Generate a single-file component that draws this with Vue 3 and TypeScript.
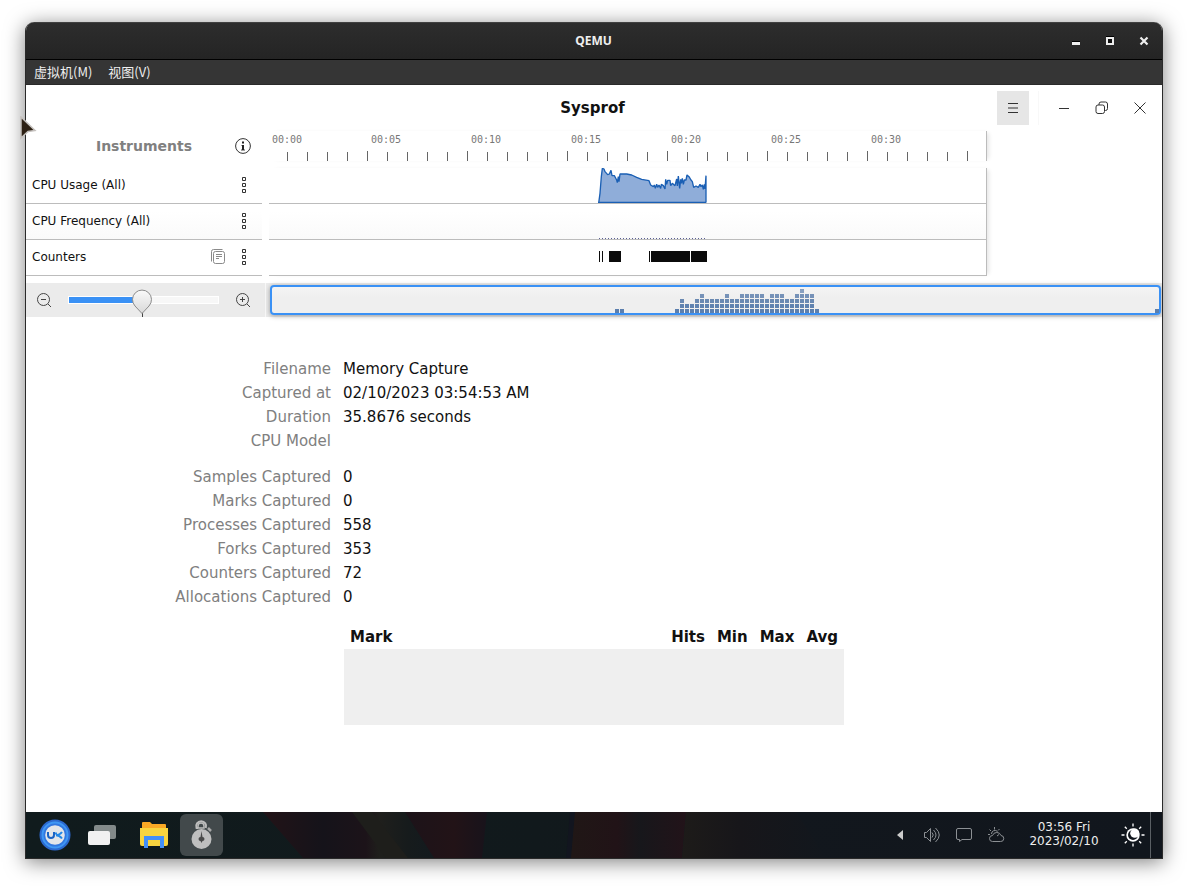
<script setup lang="ts">
import { ref, computed } from 'vue'

const menus = ['虚拟机(M)', '视图(V)']

const tickCount = 35
const ticks = Array.from({ length: tickCount }, (_, i) => ({
  x: 18 + i * 20,
  top: i >= 4 && i % 5 === 4 ? 20 : 21,
}))
const timeLabels = ['00:00', '00:05', '00:10', '00:15', '00:20', '00:25', '00:30']

const usagePoints: [number, number][] = [
  [41, 234], [45, 205], [49, 155], [52, 130], [57, 132], [60, 140], [68, 149], [73, 147], [78, 136],
  [81, 152], [88, 152], [95, 165], [97, 173], [100, 155], [102, 170], [105, 147], [125, 147],
  [140, 150], [155, 157], [170, 163], [192, 167], [197, 180], [205, 185], [208, 180], [211, 190],
  [215, 178], [218, 187], [222, 180], [227, 190], [229, 178], [235, 182], [240, 192], [242, 163],
  [245, 178], [248, 166], [255, 166], [257, 182], [262, 175], [270, 182], [275, 162], [277, 183],
  [280, 153], [284, 190], [287, 163], [289, 175], [292, 160], [295, 178], [298, 165], [303, 165],
  [306, 150], [312, 155], [318, 165], [322, 170], [326, 187], [333, 183], [340, 187], [345, 178],
  [348, 185], [352, 180], [355, 193], [358, 178], [360, 192], [363, 152], [363, 232], [41, 232],
]
const usagePath = computed(() => usagePoints.map(([x, y]) => `${x},${y}`).join(' '))

const counterBlocks = [
  { x: 330, w: 1 }, { x: 333, w: 1 }, { x: 340, w: 12 },
  { x: 380, w: 1 }, { x: 382, w: 39 }, { x: 422, w: 16 },
]

const density = [1, 3, 2, 2, 3, 4, 3, 3, 3, 3, 4, 3, 3, 4, 4, 4, 4, 4, 3, 4, 4, 4, 3, 3, 4, 5, 4, 4, 1]
const columns = [
  { x: 343, n: 1 }, { x: 348, n: 1 },
  ...density.map((n, i) => ({ x: 403 + i * 5, n })),
  { x: 883, n: 1 },
]
const cells = columns.flatMap(({ x, n }) =>
  Array.from({ length: n }, (_, level) => ({ x, y: 22 - level * 5, level })),
)
const cellColors = ['#5b7fae', '#6183b0', '#6a89b2', '#7692b8', '#879fc0']

const zoom = ref(49)

const captureInfo = [
  ['Filename', 'Memory Capture'],
  ['Captured at', '02/10/2023 03:54:53 AM'],
  ['Duration', '35.8676 seconds'],
  ['CPU Model', ''],
]
const captureStats = [
  ['Samples Captured', '0'],
  ['Marks Captured', '0'],
  ['Processes Captured', '558'],
  ['Forks Captured', '353'],
  ['Counters Captured', '72'],
  ['Allocations Captured', '0'],
]
const groups = [captureInfo, captureStats]
</script>

<template>
  <div class="desktop">
    <section class="window">
      <header class="titlebar">
        <span></span>
        <h1>QEMU</h1>
        <div class="wm">
          <button aria-label="Minimize"><svg width="12" height="12"><path d="M2 8.500h8" stroke="#eee" stroke-width="3" /><path d="M2 6.500h8" stroke="#000" /></svg></button>
          <button aria-label="Maximize"><svg width="12" height="12"><rect x="3" y="3" width="6" height="6" fill="#111" stroke="#eee" stroke-width="2" /><path d="M2 1.500h8" stroke="#000" /></svg></button>
          <button aria-label="Close"><svg width="12" height="12"><path d="M2.500 2.500l7 7M9.500 2.500l-7 7" stroke="#eee" stroke-width="2.200" /></svg></button>
        </div>
      </header>
      <nav class="menubar">
        <button v-for="m in menus" :key="m">{{ m }}</button>
      </nav>

      <main class="app">
        <header class="appbar">
          <span></span>
          <h2>Sysprof</h2>
          <div class="controls">
            <button class="burger" aria-label="Menu"><svg width="10" height="10"><path d="M0 .5h10M0 5h10M0 9.500h10" stroke="#333" /></svg></button>
            <i class="divider"></i>
            <button aria-label="Minimize"><svg width="12" height="12"><path d="M1 6.500h10" stroke="#333" /></svg></button>
            <button aria-label="Restore">
              <svg width="14" height="14" fill="none" stroke="#333"><rect x="1" y="4" width="8.500" height="8.500" rx="2" /><path d="M4 4V3a2 2 0 0 1 2-2h4.500a2 2 0 0 1 2 2v4.500a2 2 0 0 1-2 2h-1" /></svg>
            </button>
            <button aria-label="Close"><svg width="12" height="12"><path d="M.5 .5l11 11M11.500 .5l-11 11" stroke="#333" /></svg></button>
          </div>
        </header>

        <div class="instruments">
          <div class="side-head">
            <span></span>
            <h3>Instruments</h3>
            <button aria-label="Information">
              <svg width="16" height="16"><circle cx="8" cy="8" r="7.400" fill="none" stroke="#333" /><path d="M8 3.500v2" stroke="#222" stroke-width="2" /><path d="M6.500 7.500H8M6 12h4" fill="none" stroke="#444" /><path d="M8 7v5" stroke="#222" stroke-width="2" /></svg>
            </button>
          </div>
          <div class="ruler">
            <svg width="717" height="30" aria-label="Timeline">
              <text v-for="(t, i) in timeLabels" :key="t" :x="i === 0 ? 3 : 2 + i * 100" y="12">{{ t }}</text>
              <rect v-for="t in ticks" :key="t.x" :x="t.x" :y="t.top" width="1" :height="30 - t.top" fill="#666" />
            </svg>
          </div>

          <div class="side-rows">
            <div class="side-row">
              <span>CPU Usage (All)</span>
              <button aria-label="CPU usage options"><svg class="dots" width="4" height="16"><path d="M.5 .5h3v3h-3zM.5 6.500h3v3h-3zM.5 12.500h3v3h-3z" /></svg></button>
            </div>
            <div class="side-row shade">
              <span>CPU Frequency (All)</span>
              <button aria-label="CPU frequency options"><svg class="dots" width="4" height="16"><path d="M.5 .5h3v3h-3zM.5 6.500h3v3h-3zM.5 12.500h3v3h-3z" /></svg></button>
            </div>
            <div class="side-row">
              <span>Counters</span>
              <button aria-label="Expand counters">
                <svg width="16" height="16" fill="none" stroke="#8a8a8a"><rect x="3.500" y="2.500" width="11" height="12" rx="2" /><path d="M1.500 12.500V2.500a2 2 0 0 1 2-2H12.500M6 5.500h6M6 7.500h6M6 9.500h3" /></svg>
              </button>
              <button aria-label="Counters options"><svg class="dots" width="4" height="16"><path d="M.5 .5h3v3h-3zM.5 6.500h3v3h-3zM.5 12.500h3v3h-3z" /></svg></button>
            </div>
          </div>
          <div class="tracks">
            <div class="track">
              <svg width="717" height="35" viewBox="0 0 2151 105">
                <polygon transform="translate(948 -129)" :points="usagePath" fill="#8fadd9" stroke="#1a5fb4" stroke-width="4" stroke-linejoin="bevel" />
              </svg>
            </div>
            <div class="track shade">
              <svg width="717" height="35"><path d="M330 34.500H438" stroke="#5a5f94" stroke-dasharray="1 2" /></svg>
            </div>
            <div class="track">
              <svg width="717" height="35"><rect v-for="b in counterBlocks" :key="b.x" :x="b.x" y="11" :width="b.w" height="11" fill="#0b0b0b" /></svg>
            </div>
          </div>
        </div>

        <div class="zoombar">
          <div class="zoomer">
            <button aria-label="Zoom out"><svg width="16" height="16" fill="none" stroke="#444"><circle cx="7.500" cy="7.500" r="6" /><path d="M12 12l3 3M5 7.500h5" /></svg></button>
            <input v-model.number="zoom" type="range" min="0" max="100" aria-label="Zoom" />
            <button aria-label="Zoom in"><svg width="16" height="16" fill="none" stroke="#444"><circle cx="7.500" cy="7.500" r="6" /><path d="M12 12l3 3M5 7.500h5M7.500 5v5" /></svg></button>
          </div>
          <div class="overview">
            <svg viewBox="0 0 887 26" preserveAspectRatio="none" shape-rendering="crispEdges">
              <rect v-for="(c, i) in cells" :key="i" :x="c.x" :y="c.y" width="4" height="4" :fill="cellColors[c.level]" />
            </svg>
          </div>
        </div>

        <div class="details">
          <dl v-for="(g, i) in groups" :key="i">
            <template v-for="[label, value] in g" :key="label">
              <dt>{{ label }}</dt>
              <dd>{{ value }}</dd>
            </template>
          </dl>
          <table>
            <thead>
              <tr><th class="wide">Mark</th><th>Hits</th><th>Min</th><th>Max</th><th>Avg</th></tr>
            </thead>
            <tbody>
              <tr><td colspan="5"></td></tr>
            </tbody>
          </table>
        </div>
      </main>

      <footer class="taskbar">
        <svg class="wallpaper" viewBox="0 0 1136 46" preserveAspectRatio="none">
          <defs>
            <linearGradient id="base"><stop offset="0" stop-color="#101b1d" /><stop offset=".45" stop-color="#11191c" /><stop offset=".65" stop-color="#12171d" /><stop offset="1" stop-color="#11161d" /></linearGradient>
            <linearGradient id="beamA"><stop offset="0" stop-color="#221317" /><stop offset=".35" stop-color="#15131a" /><stop offset=".6" stop-color="#1c1319" /><stop offset=".68" stop-color="#1f1f1c" /><stop offset=".85" stop-color="#161b1c" /><stop offset="1" stop-color="#131a1e" /></linearGradient>
            <linearGradient id="beamB"><stop offset="0" stop-color="#1c1319" /><stop offset=".6" stop-color="#221317" /><stop offset="1" stop-color="#18131b" /></linearGradient>
            <linearGradient id="beamC"><stop offset="0" stop-color="#201716" /><stop offset=".4" stop-color="#211317" /><stop offset=".6" stop-color="#17171b" /><stop offset="1" stop-color="#221319" /></linearGradient>
            <linearGradient id="beamD"><stop offset="0" stop-color="#1d1b19" /><stop offset=".4" stop-color="#17161a" /><stop offset="1" stop-color="#12171d" /></linearGradient>
          </defs>
          <rect width="1136" height="46" fill="url(#base)" />
          <polygon points="237,0 379,0 408,46 277,46" fill="url(#beamA)" />
          <polygon points="326,0 346,0 382,46 360,46" fill="#1e1e1b" />
          <polygon points="379,0 461,0 456,46 408,46" fill="url(#beamB)" />
          <polygon points="544,0 549,0 545,46 540,46" fill="#12151f" />
          <polygon points="549,0 660,0 656,46 545,46" fill="url(#beamC)" />
          <polygon points="660,0 770,0 800,46 656,46" fill="url(#beamD)" />
        </svg>
        <div class="launchers">
          <button aria-label="Start">
            <svg width="32" height="32"><circle cx="16" cy="16" r="15.500" fill="#2c69cf" /><circle cx="16" cy="16" r="12.500" fill="#3277e0" stroke="#3f97f4" stroke-width="2" /><circle cx="16" cy="16" r="9.800" fill="#e3e5e9" /><path d="M9 13v3q0 3 3 3t3-3v-3" fill="none" stroke="#1a62c4" stroke-width="2" /><path d="M23 13q-2 3-6 3.200 3.500 0 6 3.300M17 13.500v2" fill="none" stroke="#2387e6" stroke-width="2" /></svg>
          </button>
          <button aria-label="Task view">
            <svg width="28" height="20"><rect x="6" width="22" height="14" rx="2" fill="#838a8a" /><rect y="6" width="22" height="14" rx="2" fill="#f1f1f1" /></svg>
          </button>
          <button class="apart" aria-label="Files">
            <svg width="28" height="26"><path d="M2 1q0-1 1-1h7l2 2h13q1 0 1 1v6H2z" fill="#f9a825" /><path d="M0 6h28v16q0 2-2 2H2q-2 0-2-2z" fill="#f8d43f" /><path d="M4 26V14h20v12h-4v-8H8v8z" fill="#438ff8" /></svg>
          </button>
          <button class="active" aria-label="Sysprof">
            <svg width="24" height="32"><path d="M8 9H6.500A5 5 0 1 1 15.800 9" fill="none" stroke="#bdbdbd" stroke-width="2" /><path d="M8 9V7a3 3 0 0 1 6 0v2z" fill="#42494b" stroke="#bdbdbd" stroke-width="1.500" /><path d="M18 9l3 3" stroke="#a8a8a8" stroke-width="2.500" /><circle cx="11.500" cy="20" r="10" fill="#bfbfbf" /><path d="M11.500 12l1 6a2 2 0 0 1 0 4l-1 2-1-2a2 2 0 0 1 0-4z" fill="#4a4a4a" /></svg>
          </button>
        </div>
        <div class="tray">
          <button aria-label="Show hidden icons"><svg width="6" height="10"><path d="M6 0v10L0 5z" fill="#ccc" /></svg></button>
          <button aria-label="Volume"><svg width="18" height="16" fill="none" stroke="#8c9094"><path d="M1.500 5.500h2L7.500 1.500v13L3.500 10.500h-2zM9 5.500q2.500 2.500 0 5M10.500 3q5 5 0 10M12.500 1q7.500 7 0 14" /></svg></button>
          <button aria-label="Notifications"><svg width="16" height="14" fill="none" stroke="#8c9094"><path d="M2 .5h12q1.500 0 1.500 1.500v8q0 1.500-1.500 1.500H6L3.500 13.500v-2H2q-1.500 0-1.500-1.500V2Q.5 .5 2 .5z" /></svg></button>
          <button aria-label="Weather"><svg width="17" height="16" fill="none" stroke="#8c9094"><path d="M4.500 14.500a3 3 0 0 1 0-6 4.500 4.500 0 0 1 8.500 0 3 3 0 0 1-.5 6zM3.500 7A3.500 3.500 0 0 1 9.500 4.500M6.500 0v2.500M1.500 2.500L3 4M11.500 2L10 3.500M0 7.500h2M9 9l2-1.500" /></svg></button>
          <time>03:56 Fri<br />2023/02/10</time>
          <button class="night" aria-label="Night mode">
            <svg width="24" height="24"><circle cx="12" cy="12" r="6.700" fill="#fff" /><circle cx="12" cy="12" r="5" fill="#11161d" /><circle cx="13.800" cy="10.200" r="4.600" fill="#fff" /><path d="M12 .5v3M12 20.500v3M.5 12h3M20.500 12h3M3.800 3.800l2 2M18.200 18.200l2 2M20.200 3.800l-2 2M5.800 18.200l-2 2" stroke="#fff" stroke-width="1.300" /></svg>
          </button>
          <button class="show-desktop" aria-label="Show desktop"></button>
        </div>
      </footer>
    </section>

    <svg class="pointer" width="18" height="24"><path d="M1 1L15 14.500 8 15.500 1 22z" fill="#2d2013" stroke="#c4c0bd" stroke-width="1.500" /></svg>
  </div>
</template>

<style>
body {
  margin: 0;
  background: #fff;
}
</style>

<style scoped>
* {
  box-sizing: border-box;
}
.desktop {
  position: relative;
  display: flex;
  min-height: 100vh;
  padding: 22px 25px 28px;
  background: #fff;
  font-family: "DejaVu Sans", sans-serif;
  color: #111;
}
button {
  display: flex;
  align-items: center;
  justify-content: center;
  padding: 0;
  border: 0;
  background: none;
  color: inherit;
  font: inherit;
}
svg {
  display: block;
}
h1,
h2,
h3,
dl,
dd {
  margin: 0;
}
.window {
  flex: 1;
  display: flex;
  flex-direction: column;
  min-width: 0;
  overflow: hidden;
  border: 1px solid #2a2a2a;
  border-top: 0;
  border-radius: 9px 9px 0 0;
  background: #fff;
  box-shadow: 0 3px 20px rgba(0, 0, 0, 0.5);
}
.titlebar {
  display: grid;
  grid-template-columns: 1fr auto 1fr;
  align-items: center;
  height: 38px;
  padding-right: 1px;
  border-top: 1px solid #404040;
  border-bottom: 1px solid #000;
  background: linear-gradient(#2d2d2d, #242424);
}
.titlebar h1 {
  color: #eee;
  font: 700 12px/18px "Noto Sans", "Noto Sans CJK SC", sans-serif;
}
.wm {
  display: flex;
  justify-content: flex-end;
}
.wm button {
  width: 34px;
  height: 34px;
}
.menubar {
  display: flex;
  gap: 16px;
  height: 25px;
  padding: 0 8px;
  border-bottom: 1px solid #2a2a2a;
  background: #353535;
  color: #eee;
  font: 13px/20px "Noto Sans CJK SC", sans-serif;
}
.app {
  flex: 1;
}
.appbar {
  display: grid;
  grid-template-columns: 1fr auto 1fr;
  align-items: center;
  height: 46px;
  padding-right: 3px;
}
.appbar h2 {
  font-size: 15px;
  line-height: 24px;
}
.controls {
  display: flex;
  align-items: center;
  justify-content: flex-end;
}
.controls button {
  width: 38px;
  height: 34px;
}
.controls .burger {
  width: 32px;
  background: #e6e6e6;
}
.divider {
  width: 1px;
  height: 34px;
  margin: 0 6px 0 9px;
  background: #f8f8f8;
}
.instruments {
  display: grid;
  grid-template-columns: 236px 1fr;
  grid-template-rows: 30px auto;
  gap: 7px;
}
.side-head {
  display: grid;
  grid-template-columns: 24px 1fr 24px;
  align-items: center;
  padding: 0 7px;
}
.side-head h3 {
  color: #808080;
  font-size: 14px;
  line-height: 24px;
  text-align: center;
}
.ruler,
.tracks {
  justify-self: start;
  border-right: 1px solid #bcbcbc;
  box-shadow: 4px 0 4px -2px rgba(0, 0, 0, 0.1);
}
.ruler text {
  fill: #777;
  font: 10px "DejaVu Sans Mono", monospace;
}
.side-row {
  display: flex;
  align-items: center;
  gap: 2px;
  height: 36px;
  padding: 0 6px 1px;
  border-bottom: 1px solid #bcbcbc;
  font-size: 12px;
  line-height: 20px;
}
.side-row span {
  flex: 1;
}
.side-row button {
  width: 24px;
  height: 24px;
}
.dots {
  fill: none;
  stroke: #333;
}
.shade {
  background: linear-gradient(#fff 20%, #fafafa);
}
.track {
  border-bottom: 1px solid #bcbcbc;
}
.zoombar {
  display: flex;
  margin-top: 7px;
  height: 34px;
  background: #ebebeb;
}
.zoomer {
  display: flex;
  align-items: center;
  width: 240px;
  padding: 0 14px 0 10px;
  border-right: 1px solid #f8f8f8;
}
.zoomer button {
  width: 16px;
  height: 16px;
}
.zoomer input {
  flex: 1;
  min-width: 0;
  height: 8px;
  margin: 0 16px;
  appearance: none;
  border: 1px solid #fff;
  background: linear-gradient(90deg, #3a91f5 50%, #f7f7f7 50%);
}
.zoomer input::-webkit-slider-thumb {
  appearance: none;
  width: 20px;
  height: 28px;
  margin-top: 6px;
  background: url("data:image/svg+xml,%3Csvg xmlns='http://www.w3.org/2000/svg' width='20' height='28'%3E%3ClinearGradient id='g' x2='0' y2='1'%3E%3Cstop stop-color='%23fafafa'/%3E%3Cstop offset='1' stop-color='%23d8d8d8'/%3E%3C/linearGradient%3E%3Cpath d='M10.500 23v5' stroke='%23444'/%3E%3Cpath d='M10 24.500L3 17A9.500 9.500 0 1 1 17 17z' fill='url(%23g)' stroke='%238c8c8c'/%3E%3C/svg%3E") no-repeat;
}
.overview {
  flex: 1;
  min-width: 0;
  margin: 2px 1px 2px 4px;
  border: 2px solid #3a91f5;
  border-radius: 4px;
  background: linear-gradient(#f4f4f4, #efefef 40%);
  box-shadow: 0 1px 5px rgba(0, 0, 0, 0.35);
}
.overview svg {
  width: 100%;
  height: 26px;
}
.details {
  display: flex;
  flex-direction: column;
  gap: 12px;
  padding: 40px 0;
  font-size: 15px;
  line-height: 24px;
}
dl {
  display: grid;
  grid-template-columns: 1fr 502px 1fr;
  grid-auto-rows: 24px;
}
dt {
  grid-column: 1;
  padding-right: 12px;
  color: #808080;
  text-align: right;
}
dd {
  grid-column: 2;
}
table {
  width: 500px;
  margin: 4px auto 0;
  border-collapse: collapse;
}
th {
  padding: 0 6px;
  text-align: left;
}
.wide {
  width: 100%;
}
td {
  height: 76px;
  padding: 0;
  background: #efefef;
}
.taskbar {
  position: relative;
  display: flex;
  justify-content: space-between;
  height: 46px;
  background: #11181c;
  color: #eee;
}
.wallpaper {
  position: absolute;
  inset: 0;
  width: 100%;
  height: 100%;
}
.launchers,
.tray {
  position: relative;
  display: flex;
  align-items: center;
}
.launchers {
  gap: 5px;
  padding-left: 8px;
}
.launchers button {
  width: 42px;
  height: 42px;
}
.launchers .apart {
  margin-left: 5px;
}
.launchers .active {
  width: 43px;
  border-radius: 6px;
  background: #42494b;
}
.tray button {
  width: 32px;
  height: 46px;
}
.tray time {
  width: 104px;
  padding-bottom: 2px;
  font-size: 12px;
  line-height: 14px;
  text-align: center;
}
.tray .night {
  width: 34px;
}
.tray .show-desktop {
  width: 12px;
  border-left: 1px solid #5a5f64;
}
.pointer {
  position: absolute;
  left: 20px;
  top: 116px;
}
</style>
